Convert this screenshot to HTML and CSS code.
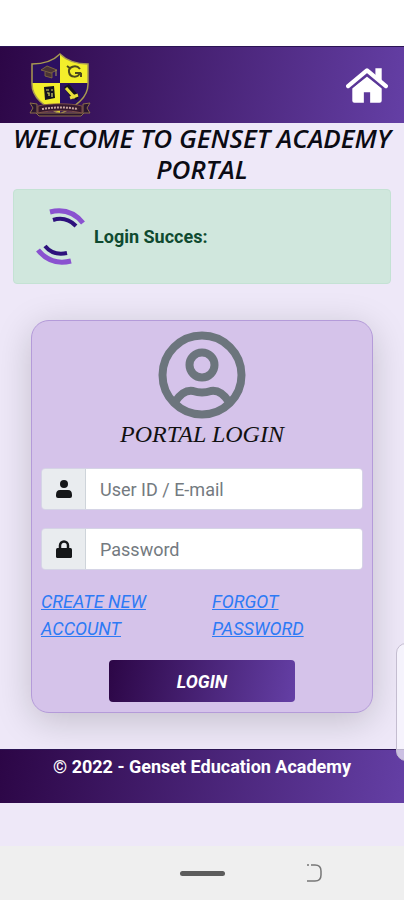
FILE: index.html
```html
<!DOCTYPE html>
<html lang="en">
<head>
  <meta charset="UTF-8">
  <meta name="viewport" content="width=device-width, initial-scale=1.0">
  <title>Genset Academy Portal</title>
  <link rel="stylesheet" href="styles.css">
</head>
<body>
  <div class="status-bar"></div>

  <header class="topbar">
    <svg class="logo" viewBox="0 0 64 66" role="img" aria-label="Genset Academy crest">
      <path d="M32 2C25 9 14 12 4 12V32C4 46 16 54 32 62C48 54 60 46 60 32V12C50 12 39 9 32 2Z" fill="#2b1060"/>
      <path d="M32 2C39 9 50 12 60 12V31H32Z" fill="#f3ee2b"/>
      <path d="M4 31H32V62C16 54 4 46 4 31Z" fill="#f3ee2b"/>
      <path d="M32 2C25 9 14 12 4 12V32C4 46 16 54 32 62C48 54 60 46 60 32V12C50 12 39 9 32 2Z" fill="none" stroke="#a89a50" stroke-width="1.5"/>
      <path d="M13 18L19 14L29 18L23 21ZM17 20V24L24 26V21" fill="#4a3436" stroke="#8b7540" stroke-width=".8"/>
      <path d="M28 18V24" stroke="#a89a50"/>
      <path d="M52 17C48 12 40 15 41 20C42 26 50 26 52 21H47M53 21V25M39 14L43 17" fill="none" stroke="#4c481e" stroke-width="2"/>
      <path d="M16 35L26 34L27 46L17 48Z" fill="#15121f"/>
      <path d="M18 38H21M23 38H25M19 41H21V44M24 41V45" stroke="#d9d96a" stroke-width="1.2"/>
      <path d="M36 35L41 32L51 44L49 48L43 46Z" fill="#17131c"/>
      <path d="M38 36L47 46M42 46L50 43" stroke="#e8e03a" stroke-width="3"/>
      <path d="M2 51L9 52V61H55V52L62 51L59 56L62 61H56L53 64H11L8 61H2L5 56Z" fill="#2a1430" stroke="#8b6f48"/>
      <path d="M10 54C22 51 42 51 54 54V61C42 58 22 58 10 61Z" fill="#35182f" stroke="#8b5a48" stroke-width=".8"/>
      <path d="M14 57Q32 54 50 57" fill="none" stroke="#c9a6a0" stroke-width="2" stroke-dasharray="2 1"/>
    </svg>
    <a class="home" href="#" aria-label="Home">
      <svg viewBox="0 0 40 34">
        <path d="M2 18L20 3L38 18" fill="none" stroke="#fff" stroke-width="4" stroke-linecap="round" stroke-linejoin="round"/>
        <path d="M28 1H34V14L28 9Z" fill="#fff"/>
        <path d="M6 20L20 8L34 20V32Q34 34 32 34H23V24H17V34H8Q6 34 6 32Z" fill="#fff"/>
        <path d="M5 20L20 8L35 20" fill="none" stroke="#5a3797" stroke-width="1.5"/>
      </svg>
    </a>
  </header>

  <main class="content">
    <h1>WELCOME TO GENSET ACADEMY PORTAL</h1>

    <div class="alert" role="status">
      <svg class="spinner" viewBox="0 0 52 60">
        <g fill="none" stroke-linecap="butt">
          <path d="M14 5Q34 0 47 16" stroke="#8a52d0" stroke-width="5"/>
          <path d="M17 13Q30 9 40 19" stroke="#2d117c" stroke-width="4"/>
          <path d="M2 43Q15 59 35 54" stroke="#8a52d0" stroke-width="5"/>
          <path d="M9 39Q17 49 31 46" stroke="#2d117c" stroke-width="4"/>
        </g>
      </svg>
      <strong>Login Succes:</strong>
    </div>

    <!-- Login Form -->
    <form class="card">
      <svg class="avatar" viewBox="0 0 88 88">
        <g fill="none" stroke="#6c757d" stroke-width="8">
          <circle cx="44" cy="44" r="39.5"/>
          <circle cx="44" cy="34" r="12.5"/>
          <path d="M17 71C23 62 29 59 35 60Q44 63 53 60C59 59 65 62 71 71"/>
        </g>
      </svg>
      <h2>PORTAL LOGIN</h2>

      <div class="input-group">
        <label for="userid" aria-label="User ID">
          <svg viewBox="0 0 16 18">
            <circle cx="8" cy="4" r="4"/>
            <path d="M4 10H12Q16 10 16 15V16Q16 18 14 18H2Q0 18 0 16V15Q0 10 4 10Z"/>
          </svg>
        </label>
        <input type="text" id="userid" name="userid" placeholder="User ID / E-mail">
      </div>
      <div class="input-group">
        <label for="password" aria-label="Password">
          <svg viewBox="0 0 16 18">
            <path d="M4 9V5.5A4 4 0 0 1 12 5.5V9" fill="none" stroke="#151719" stroke-width="2.5"/>
            <rect y="8" width="16" height="10" rx="1.5"/>
          </svg>
        </label>
        <input type="password" id="password" name="password" placeholder="Password">
      </div>

      <div class="links">
        <div><a href="#">CREATE NEW ACCOUNT</a></div>
        <div><a href="#">FORGOT PASSWORD</a></div>
      </div>

      <button type="submit" class="btn">LOGIN</button>
    </form>
  </main>

  <footer class="footer">© 2022 - Genset Education Academy</footer>

  <div class="edge-handle"></div>

  <nav class="navbar">
    <span></span>
    <span class="pill"></span>
    <svg class="back" viewBox="0 0 16 18">
      <path d="M1 1H3M5 1H9Q15 1 15 7V11Q15 17 9 17H1" fill="none" stroke="#777" stroke-width="1.5"/>
    </svg>
  </nav>
</body>
</html>
```
FILE: styles.css
```css
* {
  box-sizing: border-box;
}
body {
  margin: 0;
  min-height: 100vh;
  display: flex;
  flex-direction: column;
  position: relative;
  overflow-x: hidden;
  font-family: Roboto, sans-serif;
  background-color: #eee8f8;
}
.status-bar {
  height: 46px;
  background-color: #fff;
}
.topbar {
  display: flex;
  align-items: center;
  justify-content: space-between;
  padding: 5px 16px 5px 28px;
  border-top: 1px solid #2b1455;
  background: linear-gradient(100deg, #2c0646, #643fa5);
}
.logo {
  width: 64px;
  height: 66px;
}
.home svg {
  display: block;
  width: 42px;
  height: 36px;
}
.content {
  padding: 0 13px 36px;
}
h1 {
  margin: 0 -8px;
  padding-bottom: 4px;
  font-family: "Open Sans", sans-serif;
  font-size: 26px;
  font-style: italic;
  font-weight: 600;
  line-height: 31px;
  text-align: center;
  color: #0b0b14;
}
.alert {
  display: flex;
  align-items: center;
  gap: 6px;
  height: 95px;
  padding: 0 22px;
  border: 1px solid #c4e2d4;
  border-radius: 4px;
  background-color: #d0e7dd;
  color: #0f4a30;
  font-size: 18px;
}
.spinner {
  width: 52px;
  height: 60px;
}
.card {
  display: flex;
  flex-direction: column;
  margin: 36px 18px 0;
  padding: 10px 9px;
  border: 1px solid #b49bd9;
  border-radius: 18px;
  background-color: #d5c3ea;
  box-shadow: 0 8px 36px rgba(0,0,0,0.18);
}
.avatar {
  width: 88px;
  height: 88px;
  align-self: center;
}
h2 {
  margin: 0 0 18px;
  font-family: "Liberation Serif", serif;
  font-size: 24px;
  font-style: italic;
  font-weight: normal;
  line-height: 31px;
  text-align: center;
  color: #111;
}
.input-group {
  display: flex;
  height: 42px;
  margin-bottom: 18px;
  border: 1px solid #d5d4e6;
  border-radius: 4px;
  overflow: hidden;
}
.input-group label {
  display: flex;
  align-items: center;
  justify-content: center;
  width: 44px;
  border-right: 1px solid #ced4da;
  background-color: #e9ecef;
}
.input-group svg {
  width: 16px;
  height: 18px;
  fill: #151719;
}
.input-group input {
  flex: 1;
  min-width: 0;
  padding: 0 14px;
  border: none;
  background-color: #fff;
  font-family: Roboto, sans-serif;
  font-size: 18px;
}
.input-group input::placeholder {
  color: #747a80;
}
.links {
  display: grid;
  grid-template-columns: 1fr 1fr;
  gap: 20px;
  margin-bottom: 18px;
  font-size: 18px;
  font-style: italic;
  line-height: 27px;
}
.links a {
  color: #2d7af5;
}
.btn {
  align-self: center;
  width: 58%;
  height: 42px;
  border: none;
  border-radius: 4px;
  background: linear-gradient(100deg, #2c0646, #643fa5);
  color: #fff;
  font-family: Roboto, sans-serif;
  font-size: 18px;
  font-style: italic;
  font-weight: bold;
}
.footer {
  height: 54px;
  padding-top: 5px;
  border-top: 1px solid #2b1455;
  background: linear-gradient(100deg, #2c0646, #643fa5);
  color: #fff;
  font-size: 18px;
  font-weight: bold;
  line-height: 24px;
  text-align: center;
}
/* system panel handle, sits over the page edge */
.edge-handle {
  position: absolute;
  top: 643px;
  right: -12px;
  width: 20px;
  height: 118px;
  border: 1px solid #c4bdd0;
  border-radius: 12px;
  background-color: rgba(250,248,255,0.7);
}
.navbar {
  display: grid;
  grid-template-columns: 1fr auto 1fr;
  align-items: center;
  height: 54px;
  margin-top: auto;
  background-color: #efefef;
}
.pill {
  width: 45px;
  height: 5px;
  border-radius: 3px;
  background-color: #5c5c5c;
}
.back {
  width: 16px;
  height: 18px;
  justify-self: center;
}
```
